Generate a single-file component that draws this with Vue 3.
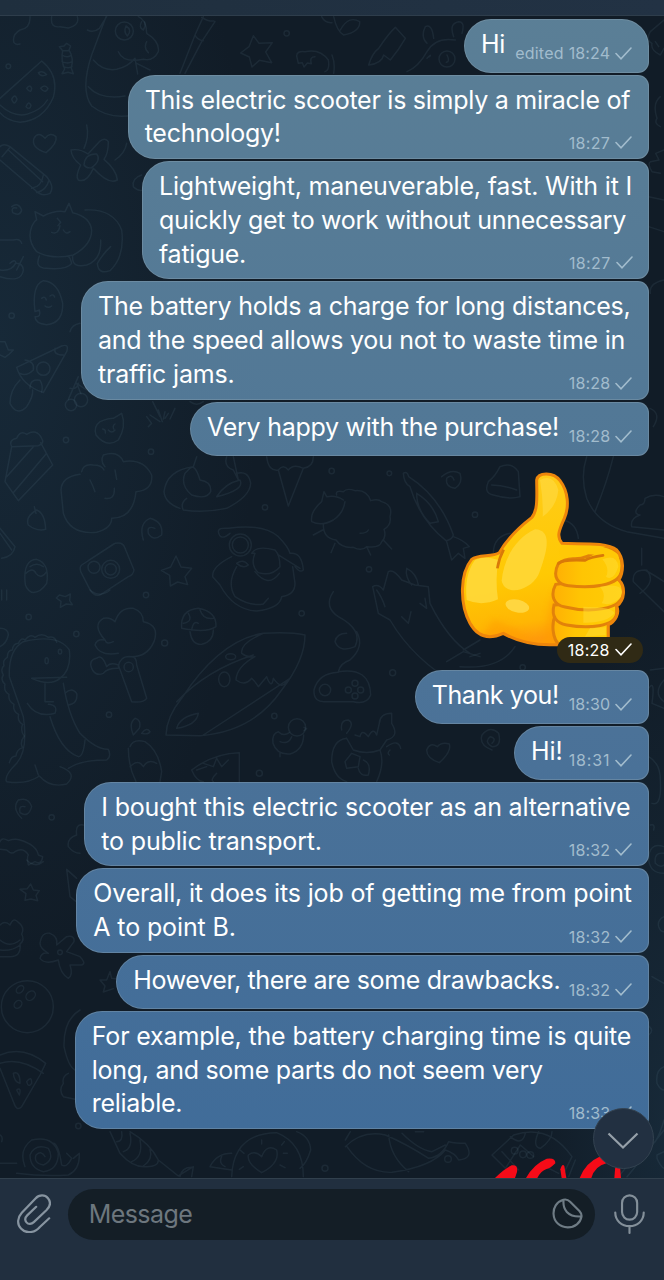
<script setup>
import { ref, onMounted } from 'vue'

const before = [
  { left: 464, lines: [['Hi', 24]], time: '18:24', edited: true, first: true },
  { left: 127.7, lines: [['This electric scooter is simply a miracle of', 485.5], ['technology!', 136]], time: '18:27' },
  { left: 142, lines: [['Lightweight, maneuverable, fast. With it I', 473], ['quickly get to work without unnecessary', 467], ['fatigue.', 87]], time: '18:27' },
  { left: 81, lines: [['The battery holds a charge for long distances,', 532.5], ['and the speed allows you not to waste time in', 527], ['traffic jams.', 136.5]], time: '18:28' },
  { left: 190, lines: [['Very happy with the purchase!', 352]], time: '18:28' },
]
const after = [
  { left: 414.7, lines: [['Thank you!', 127]], time: '18:30' },
  { left: 514, lines: [['Hi!', 31.5]], time: '18:31' },
  { left: 84.3, lines: [['I bought this electric scooter as an alternative', 529], ['to public transport.', 220.5]], time: '18:32' },
  { left: 76.3, lines: [['Overall, it does its job of getting me from point', 538.5], ['A to point B.', 142.5]], time: '18:32' },
  { left: 116.3, lines: [['However, there are some drawbacks.', 427]], time: '18:32' },
  { left: 74.7, lines: [['For example, the battery charging time is quite', 539.5], ['long, and some parts do not seem very', 451], ['reliable.', 90.5]], time: '18:33' },
]
const groups = [before, after]
const root = ref(null)

// Tracks each line so that it fills the measure stored with it.
onMounted(() => {
  root.value.querySelectorAll('[data-width]').forEach((el) => {
    const natural = el.getBoundingClientRect().width
    el.style.letterSpacing = (Number(el.dataset.width) - natural) / el.textContent.length + 'px'
  })
})
</script>

<template>
  <div ref="root" class="app">
    <header class="topbar"></header>

    <main class="chat">
      <svg class="doodles" viewBox="0 16 664 1162" width="664" height="1162">
        <g transform="scale(.33333)">
          <path d="M90 50Q92 85 60 90Q35 105 42 128Q48 136 60 132M155 50Q150 85 180 80L205 84Q240 75 232 50" />
          <path d="M0 295L125 183Q178 225 160 292Q130 362 60 367Q20 362 0 338M0 315Q40 352 80 343Q125 330 142 300" />
          <path d="M115 218q14-8 25 6q-18 8-25-6M80 265q10-14 15 0q-2 18-15 0M122 265q12-14 22 0q-8 18-22 0M35 298q10-20 16 0q-8 22-16 0M78 320q8-20 15-4q-3 16-15 4" />
          <path d="M188 152l-10-12 14-2 8-8 12 8-6 14M188 152Q182 180 194 207l-8 14 18-4 16 4-6-16Q222 175 208 152ZM186 165q15 10 26 2M186 185q18 8 30 0M190 200q16 6 26 0" />
          <path d="M318 50L275 165Q240 270 275 318Q330 360 400 345M280 180Q310 215 350 208Q385 200 405 175M265 260Q300 300 375 288M415 50Q440 60 440 100Q480 125 475 155Q460 185 430 178Q370 190 355 155M440 125Q430 145 445 158M405 175L413 222M410 190L450 210M262 90Q280 100 298 85L320 50" />
          <circle cx="373" cy="93" r="27" /><path d="M378 78q20 12 4 30q-12-12-4-30M425 65q-10 18 5 25q8-12 4-24" />
          <path d="M610 50L585 105L540 220M645 65L605 125L555 220M585 105Q592 120 610 122M605 52Q625 65 642 63" />
          <path d="M760 107l17 23 40-2-20 28 18 32-37-7-22 20-8-30-26-12 25-19Z" />
          <circle cx="860" cy="100" r="8" /><circle cx="25" cy="199" r="7" />
          <path d="M890 168Q890 152 915 155Q960 145 985 180Q990 210 975 215M890 168l5 22 12-2 5 13 10-12 12 2Q928 170 945 170M965 50Q975 70 996 68" />
          <path d="M135 415Q115 392 102 415Q92 442 138 458Q173 430 168 410Q150 395 135 415" />
          <path d="M0 440Q10 428 30 440L140 530Q165 560 150 580Q125 592 105 570L0 480M25 450L128 545M6 470L30 442M95 565Q125 560 130 525M110 578Q140 570 147 540" />
          <path d="M260 375q8 35-8 70M298 425Q315 410 325 425Q325 460 312 478Q350 510 352 540Q325 555 280 505Q260 550 235 540Q225 530 242 495Q215 475 213 450Q240 445 264 462L298 425M252 495Q255 460 290 462Q305 480 275 503Q260 506 252 495M380 430Q375 460 345 480M425 525Q395 535 400 560Q415 575 430 570" />
          <path d="M35 620Q55 605 65 630Q60 650 38 638Q32 620 50 624" />
          <path d="M105 635L130 648Q165 630 195 635L207 610L218 638Q270 650 275 690Q275 735 220 765Q155 780 110 755Q80 720 95 680Q105 660 110 660ZM118 768Q105 800 130 804Q200 812 215 790Q210 770 205 770M255 630Q340 625 365 690Q375 770 330 812Q295 825 292 790Q310 760 332 740M218 770Q215 805 260 795Q305 780 302 720M172 655l10 12-8 10M180 677q-5 28-25 20M190 690q8 15 20 5" />
          <path d="M0 720h40q20-5 25 10M0 830Q65 850 70 810Q68 790 50 790M0 810Q35 815 48 788Q45 775 30 790M50 810L70 770" />
        </g>

        <g transform="translate(0 280) scale(.33333)">
          <path d="M105 95Q95 15 130 2Q175 5 188 70Q190 130 140 134Q105 130 105 110Q125 112 118 90ZM125 55q10-8 14 5M150 48q10-8 14 3M135 78q10 8 20 0" />
          <circle cx="35" cy="107" r="8" /><path d="M0 185L15 185 25 210 40 210 28 222 15 232 0 225M210 155Q215 135 240 130" />
          <path d="M50 262L185 198Q208 190 200 215L130 338Q65 315 50 262M75 240Q105 245 100 270Q80 290 60 280M165 205q-5 20 25 20" /><circle cx="130" cy="266" r="20" />
          <path d="M90 325q0-30 30-24q10 15 5 35M60 300Q30 330 30 370Q50 410 80 380Q100 350 98 330" />
          <circle cx="213" cy="375" r="17" /><circle cx="243" cy="360" r="20" /><path d="M205 358L235 290M243 342L230 310L260 330M210 325Q230 330 235 310" />
          <path d="M458 365L480 410M440 410l15 20-10 10M450 405l30 20M475 390l12 35M495 395l-5 22M525 385l-15 32M505 400l-10 15M570 365q20 15 40 0" />
          <path d="M300 425Q280 440 288 465Q320 505 355 480Q380 440 365 400L340 415Q325 415 300 425M308 447q10 2 8 12M345 432q-8 5-4 15M325 450q10 12 20 0" />
          <path d="M35 500Q25 480 50 475Q60 450 80 463Q110 445 125 475Q135 490 115 497L35 500L15 605L55 662L158 555L122 488M20 590L100 500M40 638L140 520" />
          <circle cx="198" cy="480" r="8" /><circle cx="453" cy="515" r="8" /><circle cx="795" cy="682" r="8" />
          <path d="M245 575Q250 550 280 555Q305 555 312 570M240 583Q185 590 183 630L190 700Q210 765 290 757Q335 745 335 715Q400 715 408 635Q460 630 455 585Q430 535 370 545Q355 510 310 525Q300 545 315 560M270 600q10 20 15 35M345 570l5 28M343 625Q345 660 315 655" />
          <path d="M590 530L580 560Q500 570 492 635Q495 670 540 685M550 690Q610 700 680 685Q750 650 752 610Q745 570 710 580M550 690Q540 670 560 655M555 580Q540 615 575 645Q620 660 632 635Q635 605 600 600Q585 550 570 565ZM650 650Q675 610 720 600Q735 630 650 650M680 530Q670 560 700 570L715 600L700 530" />
          <path d="M800 530Q805 575 835 570L865 678L910 565Q940 560 940 530M835 570q15-20 30 0q15-20 45-5" />
          <path d="M103 680l5 20M137 748Q135 700 110 690Q75 710 85 735Q110 755 137 748" />
          <path d="M430 780Q415 730 450 715Q490 725 485 765Q460 785 445 760Q440 735 465 745" />
          <path d="M0 745L45 800Q40 830 5 835M0 760L35 810" />
          <path d="M245 855L345 790Q370 785 375 805L402 870Q400 885 385 890L300 945Q280 950 268 925L242 875Q238 860 245 855M265 842L340 792" /><circle cx="332" cy="868" r="27" /><circle cx="332" cy="868" r="17" /><circle cx="282" cy="862" r="18" />
          <path d="M75 905Q70 840 110 838Q150 850 140 910Q120 940 95 937Q75 925 75 905M78 880q20-20 30 0q15 20 32-5M90 860q20-15 40 0" />
          <path d="M528 828l15 33 32 4-20 25 8 24-30-8-22 12-2-32-25-15 28-10Z" />
        </g>

        <g transform="translate(200 440) scale(.33333)">
          <circle cx="395" cy="93" r="8" /><circle cx="568" cy="100" r="7" /><circle cx="507" cy="388" r="8" /><circle cx="305" cy="520" r="8" /><circle cx="578" cy="698" r="9" /><circle cx="825" cy="224" r="8" /><circle cx="178" cy="1000" r="9" />
          <path d="M90 280Q60 305 55 275Q55 262 85 265Q190 250 235 290Q265 320 270 340Q305 335 310 390Q300 400 285 380M95 350Q35 380 38 410L60 435Q100 510 170 513Q240 505 245 470Q285 465 285 430L278 380M110 380Q80 430 105 470Q150 500 190 492L205 475M165 395Q205 445 238 400M235 345L300 385M155 340Q170 315 225 330Q240 345 240 380Q215 410 175 398Q150 375 165 340ZM110 370q20-15 35 5q-15 12-35-5" />
          <circle cx="121" cy="315" r="33" /><circle cx="121" cy="315" r="24" />
          <path d="M380 170L372 155L365 185Q330 215 335 245Q365 260 400 240Q430 220 435 185M410 165Q405 150 430 155Q440 143 465 152Q500 148 512 182Q535 175 545 185Q580 195 570 230Q575 255 552 268Q560 290 545 305Q540 325 500 320Q485 335 460 322Q425 325 408 300Q370 295 370 255M430 180Q410 165 380 170M340 285l28-15M405 310l-12 28M500 320l12 25M550 300l25 27M480 280q20 0 25-10" />
          <path d="M610 100q12-8 16 10Q720 170 760 285Q755 300 738 302Q660 240 630 140Q612 130 610 100M650 160Q650 210 690 250L715 245Q700 190 650 160M740 305l15 55 20-20 20 15-5-30 18-5Q790 300 760 290" />
          <path d="M725 110Q755 85 780 100Q790 130 765 145Q735 140 740 115Q755 100 762 120" />
          <path d="M518 440Q535 430 550 450L565 395Q580 385 605 420L645 435L685 440L690 490Q745 600 810 640M518 440L535 520L570 540Q640 660 780 740M620 385Q650 400 655 435M620 385Q615 410 635 435M605 530l20 20 8-35M660 490l20 15-5-30M530 450Q545 470 555 500M790 630L840 600M740 665L790 635L840 650" />
          <path d="M400 455Q370 500 415 530Q490 570 465 620Q420 640 405 605Q410 580 440 580M470 575Q495 620 450 660Q420 670 415 695Q510 680 512 765Q500 795 460 785L380 785Q340 790 342 750Q355 700 415 697" />
          <circle cx="375" cy="750" r="17" /><circle cx="465" cy="730" r="9" /><circle cx="445" cy="750" r="9" /><circle cx="482" cy="750" r="9" /><circle cx="465" cy="768" r="9" />
          <circle cx="291" cy="862" r="26" />
          <path d="M268 878Q250 890 235 875Q215 880 219 910Q230 945 270 942Q310 930 311 885M240 905q25 10 35-15M240 940v10M312 862l8 4-8 6" />
          <path d="M440 895Q395 900 395 965Q405 1015 440 1025M540 930Q555 970 530 1025M440 895L460 930Q500 945 540 930L560 900Q600 890 575 850L575 820Q540 820 538 850L530 885Q520 860 505 890Q485 865 480 890L465 885M425 870Q420 840 445 840Q465 850 440 880M435 965L455 940L480 950L475 980L440 985ZM490 960Q515 970 505 1005Q480 1010 475 985M560 920q35-25 42 5M570 930q-10 10-2 15" />
          <path d="M712 920Q690 905 680 930Q680 955 718 968Q755 935 748 912Q725 905 712 920" />
        </g>

        <g transform="translate(0 590) scale(.33333)">
          <circle cx="86" cy="81" r="8" /><circle cx="229" cy="132" r="8" /><circle cx="494" cy="159" r="9" /><circle cx="327" cy="374" r="8" /><circle cx="823" cy="378" r="8" /><circle cx="155" cy="682" r="8" /><circle cx="438" cy="15" r="8" />
          <path d="M0 115Q25 115 25 135Q20 160 0 170M5 0v30M20 0v30M270 0Q300 25 330 0M178 15l18 5 15-8-2 20 8 12-18-2-18 10 2-18-14-10Z" />
          <path d="M70 155Q175 130 208 180Q215 240 180 265Q150 290 95 265L200 262M70 155Q25 180 28 260L70 380Q85 480 50 520Q10 560 20 575Q80 585 118 558Q150 595 200 582Q235 550 180 530M190 280Q205 375 240 430Q290 480 325 478Q335 500 320 510Q240 510 205 535M150 380Q180 480 235 500Q250 500 255 450M82 340Q110 385 165 370Q175 345 145 343M135 280v55h25M195 310Q215 290 230 310Q235 340 205 345M115 555l-10-30" />
          <path d="M75 150q-10-10-20 10q-15 0-18 20q-15 0-15 22q-15 8-10 25q-12 10-2 28q-10 15 5 28q-5 20 12 30q-3 20 15 30q-5 20 14 30q-5 20 12 30q-8 20 5 35q-15 20-5 35q-18 5-20 25q-15 0-20 20M75 150q15-20 30-8q20-15 40 0q20-5 25 15" /><ellipse cx="140" cy="212" rx="5" ry="9" /><ellipse cx="180" cy="185" rx="5" ry="7" />
          <path d="M355 190Q300 200 285 165Q290 145 315 150Q275 105 310 85Q330 80 345 95Q360 50 400 55Q430 65 430 95Q480 105 462 155Q440 205 385 200M315 150Q320 165 340 155M355 230q5-35 40-30q15 0 15 25L440 325Q430 340 395 335L355 225Q330 215 320 230Q305 190 290 205Q265 210 275 235Q285 260 310 250Q320 235 355 235" /><circle cx="386" cy="231" r="14" />
          <path d="M545 115Q540 60 595 55Q650 65 648 110Q620 130 545 115M570 125Q575 165 605 163Q640 155 640 120M565 70Q580 95 550 100M600 60Q610 90 640 85M595 100q-15-10-20 20" />
          <path d="M498 435Q500 380 545 325Q660 150 790 130Q870 125 915 135Q915 210 845 300Q760 425 600 437ZM530 335Q620 240 760 195M610 435L870 265M790 130Q720 160 725 190Q745 205 765 200Q710 230 708 270Q735 290 755 265Q770 280 775 290L800 260Q815 300 820 265Q845 300 860 275M530 415Q540 380 595 370Q590 405 530 415" /><ellipse cx="673" cy="268" rx="17" ry="22" /><ellipse cx="692" cy="200" rx="15" ry="9" />
          <path d="M400 435Q385 400 405 385Q425 390 418 415ZM425 430q15-20 25-5q-5 10-25 5M390 470Q400 445 435 455Q475 480 485 545L480 575M385 475Q385 530 408 575M390 530Q415 505 430 530Q445 505 470 520M575 540Q640 490 718 488V575M575 540Q590 575 610 575M610 520l30 10 10-25 15 25 20-20M650 550q-20 20-10 25M590 540L620 530" />
          <path d="M65 685Q35 655 55 630Q85 620 95 650Q85 685 60 668Q55 645 75 650" />
          <path d="M0 755Q5 740 25 752Q45 745 60 750Q110 765 115 795L128 800Q125 825 105 815L85 825Q80 800 85 795Q70 770 45 785Q35 795 20 780L0 778M250 705Q225 700 230 735Q200 745 205 770Q220 790 240 790" />
        </g>

        <g transform="translate(0 860) scale(.33333)">
          <path d="M80 0q25 25 50 5M92 72l8 18 18 2-10 14 5 16-20-5-18 4 3-20-18-13 22-2Z M230 55L200 28L210 110L235 130" />
          <path d="M0 195q15-15 30 0q10-25 25-8q20 15 10 35q10 20-5 30Q65 290 30 290H0M0 240Q30 265 60 240M0 270Q35 275 60 255" />
          <path d="M120 250Q125 215 150 220Q175 230 170 255L200 230Q225 225 222 245L200 275L240 290Q260 310 245 315L210 315Q220 345 205 355Q180 340 175 300Q135 315 120 295Q125 275 145 280Q120 265 120 250" /><circle cx="180" cy="277" r="7" />
          <circle cx="82" cy="440" r="78" /><ellipse cx="60" cy="388" rx="9" ry="13" transform="rotate(45 60 388)" /><ellipse cx="92" cy="407" rx="12" ry="16" transform="rotate(45 92 407)" /><ellipse cx="54" cy="433" rx="10" ry="13" transform="rotate(45 54 433)" />
          <path d="M330 335l5 20 18 2M330 335l-10 25-20 0 15 18-5 18 30-10M240 450Q190 480 192 560Q205 620 225 630M205 640Q185 650 190 670Q175 690 190 710L225 718" />
          <path d="M0 585Q70 555 137 610L120 645L65 740Q50 755 42 730L0 625M0 610Q60 590 130 640M40 640q20-8 20 30q-18-5-20-30M80 665q15-20 15 5q-10 15-15-5M50 690q15-10 8 15Z" />
          <circle cx="235" cy="798" r="8" /><circle cx="975" cy="925" r="9" />
          <path d="M75 920Q55 870 95 840Q160 825 175 880Q175 930 130 935Q90 925 90 885Q105 850 145 865Q165 900 130 915Q100 910 108 885Q125 870 135 890M160 850Q175 850 185 915Q200 925 215 895L200 880M220 895L238 880Q240 930 205 945Q130 950 50 940M0 910H50M0 825q10 5 5 20" />
          <path d="M330 815L360 880Q400 925 440 920Q475 920 475 900Q450 850 390 815M350 845q20 0 15-30M370 875q30-10 20-55M395 905q35-15 25-65M430 918q30-20 20-50M475 900L535 948L580 920L575 950M540 950Q545 920 580 922" />
          <path d="M695 950Q700 820 830 818Q910 850 910 950M630 920Q650 880 695 880M630 920L695 930M665 890q-10 20 10 30M890 815Q930 830 932 870Q920 910 900 925M785 938Q740 910 745 885Q765 870 785 890Q800 850 830 870Q840 910 785 938M720 870l12 10M730 920l-12 8M785 840v12M845 855l8-10M850 880h12M840 915l15 8" />
        </g>

        <g transform="translate(332 1000) scale(.33333)">
          <path d="M40 420L55 395M45 440Q100 520 180 517Q300 500 340 450Q370 460 380 480Q430 475 400 430Q370 430 350 425Q330 470 290 475Q220 430 160 405Q90 390 40 440M170 405Q175 470 230 515M210 400Q260 450 300 455L340 435M250 395h25" />
          <circle cx="348" cy="477" r="10" /><circle cx="548" cy="452" r="10" /><circle cx="573" cy="463" r="10" /><circle cx="595" cy="465" r="10" />
          <path d="M480 465L545 405Q650 370 720 470L690 530M480 465L520 505L565 435L605 470M510 455L560 510M535 410Q570 440 580 400M620 395Q600 440 625 445Q660 420 660 395M640 500L680 520M730 480l-20 50" />
          <path d="M945 75Q970 90 950 105M996 200Q970 210 975 250Q985 270 996 270M996 360Q985 400 970 425L900 480L860 530M996 390L910 500L885 530M996 455L975 465V475Q985 500 996 505" />
        </g>

        <g transform="translate(332 0) scale(.33333)">
          <path d="M5 50Q15 95 35 105Q85 95 83 65Q50 45 25 90M110 195Q120 160 140 145Q170 100 190 82L220 115Q200 150 175 180L155 165Q150 190 110 195M225 215Q260 200 285 155Q310 110 370 120M285 130Q265 110 280 80Q300 70 305 115M365 110Q350 70 380 65Q400 65 390 100M285 175q15-15 8-5M0 165Q10 190 5 220" />
          <circle cx="345" cy="177" r="24" /><path d="M345 165q10 20-2 22" />
          <path d="M996 60L955 95Q940 120 960 130Q955 150 985 165L996 145M970 125l10 15M985 290Q960 310 975 355Q965 370 985 380M996 450l-25 10 10 20-25 5Q945 490 960 515L985 520M950 590L996 600M950 680L996 695M996 840Q950 850 955 880" />
        </g>

        <g transform="translate(440 390) scale(.33333)">
          <path d="M145 275Q165 260 180 230Q215 215 235 245L240 320M145 275Q130 310 160 315Q210 330 240 320M155 285Q190 285 230 300M440 200Q420 260 440 325Q470 400 560 425L672 445M520 200Q500 280 465 365M672 320Q640 310 615 325Q615 345 600 345Q575 370 600 375Q570 385 575 410L672 420" />
          <path d="M580 575Q575 540 615 540Q650 560 672 575M580 575L672 665M620 540Q650 575 600 610M160 490Q160 440 210 430M370 390Q410 400 415 445M605 475v50M630 55Q665 70 640 110M120 790L90 800M60 830Q180 840 225 770" /><circle cx="248" cy="832" r="8" />
        </g>

        <g transform="translate(332 660) scale(.33333)">
          <path d="M480 270Q440 255 450 225Q475 195 500 220Q510 260 480 260Q455 245 475 230Q495 235 480 250M955 30L996 25M950 85Q970 55 960 130L996 145M996 60q-35 40 0 65M950 290Q985 310 985 360Q990 440 960 430M955 495q15-5 10 15M996 560Q950 545 950 600Q955 640 996 640M996 580Q965 575 970 610Q985 625 996 615M996 770Q975 780 980 800Q985 815 996 815M960 950L996 970" />
        </g>
      </svg>

      <section v-for="(group, g) in groups" :key="g" class="group">
        <article
          v-for="(m, i) in group"
          :key="i"
          class="bubble"
          :class="['rows-' + m.lines.length, { first: m.first }]"
          :style="{ width: 648.7 - m.left + 'px' }"
        >
          <p class="text">
            <span v-for="line in m.lines" :key="line[0]" class="row"><span :data-width="line[1]">{{ line[0] }}</span></span>
          </p>
          <div class="meta">
            <span v-if="m.edited" data-width="48.5">edited</span>
            <span data-width="41.5">{{ m.time }}</span>
            <svg class="tick" viewBox="0 0 17 13"><path d="M1 6.5L6 11.8L16 1" /></svg>
          </div>
        </article>

        <div v-if="g === 0" class="sticker">
          <svg class="thumb" viewBox="60 240 500 530">
            <defs>
              <linearGradient id="skin" x1="0" y1="0" x2=".15" y2="1">
                <stop offset="0" stop-color="#ffcc1c" /><stop offset=".65" stop-color="#ffc903" /><stop offset=".9" stop-color="#ffb604" /><stop offset="1" stop-color="#ff9b0b" />
              </linearGradient>
              <linearGradient id="finger" x1="0" x2="1">
                <stop offset="0" stop-color="#ffb004" /><stop offset=".4" stop-color="#ffc503" /><stop offset="1" stop-color="#ffcd06" />
              </linearGradient>
              <filter id="soft" x="-30%" y="-30%" width="160%" height="160%"><feGaussianBlur stdDeviation="9" /></filter>
              <clipPath id="hand"><path d="M290 270C295 246 340 246 360 272C385 305 388 350 373 385C355 425 350 440 366 460C420 463 500 455 530 480C553 505 551 545 537 570C557 590 555 630 530 648C540 670 525 695 505 704L505 765L340 764C275 766 225 750 190 730C150 748 115 745 90 700C58 640 60 550 95 508C115 492 155 502 178 488C205 440 240 410 275 383C295 360 290 315 290 270Z" /></clipPath>
            </defs>
            <g clip-path="url(#hand)">
              <rect x="60" y="240" width="500" height="530" fill="url(#skin)" />
              <path d="M300 790C325 710 320 650 350 590L360 770Z M160 690Q240 710 300 780L100 770Z" fill="#ff9d00" opacity=".55" filter="url(#soft)" />
              <path d="M300 270Q340 250 355 300Q350 350 308 380Q310 330 300 270Z" fill="#ffdb45" opacity=".6" />
              <path d="M285 418C340 420 320 490 295 555C270 603 195 620 185 572C190 510 225 445 285 418Z" fill="#ffd83a" opacity=".85" />
              <path d="M105 510Q135 495 175 510Q165 570 174 628Q125 650 80 630Q72 555 105 510Z" fill="#ffd83a" opacity=".9" />
              <ellipse cx="232" cy="648" rx="36" ry="19" transform="rotate(12 232 648)" fill="#ffd640" />
              <g fill="url(#finger)" stroke="#e2820a" stroke-width="9">
                <path d="M347 675C333 700 337 750 360 765H505V690Z" />
                <path d="M342 645C333 680 350 700 380 705C445 717 525 710 530 670L530 635Z" />
                <path d="M347 583C330 615 340 645 375 651C440 667 555 665 550 600Q548 575 530 565Z" />
                <path d="M355 521C335 560 355 585 385 587C445 594 540 592 545 540C553 485 510 470 475 478Q440 508 400 506Q370 507 355 521Z" />
              </g>
              <path d="M366 464Q500 456 535 495L540 520L489 498Q400 482 366 508Q350 490 366 464Z" fill="#ffc806" />
              <path d="M355 521Q365 508 435 511Q450 501 489 496" fill="none" stroke="#d97908" stroke-width="8" stroke-linecap="round" />
              <path d="M487 508Q530 490 535 530Q520 575 498 560Q510 535 487 508M480 590Q560 575 543 620Q515 650 485 640Q500 615 480 590M430 650Q520 650 523 670Q500 700 430 698M450 714L498 712 497 735 435 740" fill="#ffdc35" opacity=".5" />
            </g>
            <path d="M290 270C295 246 340 246 360 272C385 305 388 350 373 385C355 425 350 440 366 460C420 463 500 455 530 480C553 505 551 545 537 570C557 590 555 630 530 648C540 670 525 695 505 704L505 765L340 764C275 766 225 750 190 730C150 748 115 745 90 700C58 640 60 550 95 508C115 492 155 502 178 488C205 440 240 410 275 383C295 360 290 315 290 270Z" fill="none" stroke="#ee860b" stroke-width="9" />
            <path d="M172 535Q177 505 191 479" fill="none" stroke="#d97908" stroke-width="8" />
          </svg>
          <div class="stamp">
            <span data-width="42">18:28</span>
            <svg class="tick" viewBox="0 0 17 13"><path d="M1 6.5L6 11.8L16 1" /></svg>
          </div>
        </div>
      </section>

      <svg class="hundred" viewBox="490 470 378 66">
        <g fill="#f60b18">
          <path d="M490 536Q515 510 540 498Q560 495 556 518L550 536Z" />
          <path d="M583 536Q605 495 645 478Q672 474 671 492Q655 508 643 510Q628 515 617 536Z" />
          <path d="M690 536L686 510Q692 490 698 500L704 536Z" />
          <path d="M744 536Q762 490 802 473Q825 474 824 492Q790 500 779 536Z" />
          <path d="M848 536L851 500H865L868 536Z" />
        </g>
      </svg>
      <button class="jump" aria-label="Scroll down">
        <svg viewBox="0 0 32 18"><path d="M1.5 1.5L16 15.5L30.5 1.5" /></svg>
      </button>
    </main>

    <footer class="composer">
      <svg class="clip" viewBox="0 0 34 39"><path d="M32.2 24.3L22.6 33.2C18.5 38.2 9.5 40.5 4.2 34.8C-.8 29.8 1 23 4.8 18.8L18.5 4.4C22.4.3 28 .6 31 4.2C34 8 33.1 12.5 29.6 16L16.8 28.1C14.4 30.3 11.5 30.7 9.5 28.4C7.6 26.1 8.2 23.4 10.2 21.4L19.2 12.8" /></svg>
      <div class="field">
        <span data-width="103.5">Message</span>
        <svg class="note" viewBox="0 0 32 32"><path d="M11.7 1.8C4.5 4 1.3 10.3 1.6 16.5C2 24.5 8 30.3 16.2 30.3C23.7 30.3 29.3 25.7 30.4 19.4C30.8 17 30 15.4 28.3 13.5L18.7 3.8C16.6 1.7 14.4 1.1 11.7 1.8ZM12 2C10.8 11.5 16 19.8 30 19" /></svg>
      </div>
      <svg class="mic" viewBox="0 0 32 41"><rect x="8.3" y="1.3" width="15.6" height="25" rx="7.8" /><path d="M1.3 19C1.3 27.5 8 33 16 33S30.7 27.5 30.7 19M16 33V40" /></svg>
    </footer>
  </div>
</template>

<style>
body {
  margin: 0;
  background: #212f3f;
}
</style>

<style scoped>
.app {
  display: flex;
  flex-direction: column;
  width: 664px;
  height: 1280px;
  overflow: hidden;
  font-family: Inter, "Liberation Sans", sans-serif;
}
.topbar {
  flex: none;
  box-sizing: border-box;
  height: 16px;
  background: linear-gradient(90deg, #1f2f3e, #223244);
  border-bottom: 1px solid #2e3d4b;
}
.chat {
  position: relative;
  box-sizing: border-box;
  flex: 1;
  min-height: 0;
  padding: 2.5px 15.3px 0 0;
  overflow: hidden;
  background:
    radial-gradient(ellipse 260px 620px at 0 28%, #172938 0, #17293800 100%),
    radial-gradient(ellipse 130px 520px at 100% 95%, #172938 0, #17293800 100%),
    #111c27;
}
.doodles {
  position: absolute;
  inset: 0;
  fill: none;
  stroke: #7597ad;
  stroke-opacity: .11;
  stroke-width: 4.4;
  stroke-linecap: round;
  stroke-linejoin: round;
}
.group {
  position: relative;
  display: flex;
  flex-direction: column;
  align-items: flex-end;
}
.bubble {
  display: grid;
  box-sizing: border-box;
  margin-bottom: 2px;
  padding: 8px 16px 0 16px;
  border: 1px solid rgba(145, 165, 180, .38);
  border-radius: 27px 11px 11px 27px;
  background: linear-gradient(180deg, #5b7f96 0, #527896 32%, #4b7298 57%, #406c99 90%) fixed;
}
.first { border-top-right-radius: 27px; }
.rows-1 { height: 54px; }
.rows-2 { height: 84.6px; }
.rows-3 { height: 118.3px; }
.text, .meta { grid-area: 1 / 1; }
.text {
  margin: 0;
  color: #fff;
  font-size: 25px;
  line-height: 33.7px;
  white-space: nowrap;
}
.row { display: block; }
.rows-1 .text { margin-top: .3px; }
.meta, .stamp {
  display: flex;
  align-items: center;
  font-size: 16px;
  line-height: 20px;
  white-space: nowrap;
}
.meta {
  align-self: end;
  justify-self: end;
  gap: 5px;
  margin-bottom: 5.5px;
  margin-right: -.5px;
  color: #a2bccd;
}
.rows-1 .meta { margin-bottom: 8.5px; }
.tick {
  width: 17px;
  height: 13px;
  fill: none;
  stroke: currentColor;
  stroke-width: 1.6;
  stroke-linecap: round;
}
.sticker {
  position: relative;
  width: 189px;
  height: 212.2px;
}
.thumb {
  display: block;
  width: 166.7px;
  height: 176.7px;
  margin-top: 12.3px;
}
.stamp {
  position: absolute;
  right: 6px;
  bottom: 7.2px;
  gap: 5px;
  box-sizing: border-box;
  width: 86px;
  height: 26px;
  padding-left: 11px;
  border-radius: 13px;
  background: #302a15;
  color: #fff;
}
.hundred {
  position: absolute;
  left: 495.3px;
  bottom: 0;
  width: 126px;
  height: 22px;
}
.jump {
  position: absolute;
  right: 10.5px;
  bottom: 9px;
  display: grid;
  place-items: center;
  width: 61px;
  height: 61px;
  padding: 4px 0 0;
  border: 1px solid #334250;
  border-radius: 50%;
  background: #223041;
}
.jump svg {
  width: 32px;
  height: 18px;
  fill: none;
  stroke: #96a0a9;
  stroke-width: 2.2;
}
.composer {
  display: flex;
  flex: none;
  align-items: flex-start;
  box-sizing: border-box;
  height: 102px;
  padding: 10px 19.3px 0 16.7px;
  border-top: 1px solid #31404d;
  background: #212f3f;
}
.clip, .mic, .note {
  flex: none;
  fill: none;
  stroke: #8794a0;
  stroke-width: 2.2;
  stroke-linecap: round;
}
.clip {
  width: 34px;
  height: 39px;
  margin-top: 5px;
}
.field {
  display: flex;
  flex: 1;
  align-items: center;
  justify-content: space-between;
  box-sizing: border-box;
  height: 51px;
  margin: 0 18.5px 0 17.5px;
  padding: 0 12.5px 2px 20.5px;
  border-radius: 26px;
  background: #141e26;
  color: #6d777e;
  font-size: 25px;
}
.note {
  width: 31px;
  height: 31px;
  stroke: #6f7c85;
}
.mic {
  width: 31px;
  height: 40px;
  margin-top: 5px;
  stroke: #84909a;
}
</style>
